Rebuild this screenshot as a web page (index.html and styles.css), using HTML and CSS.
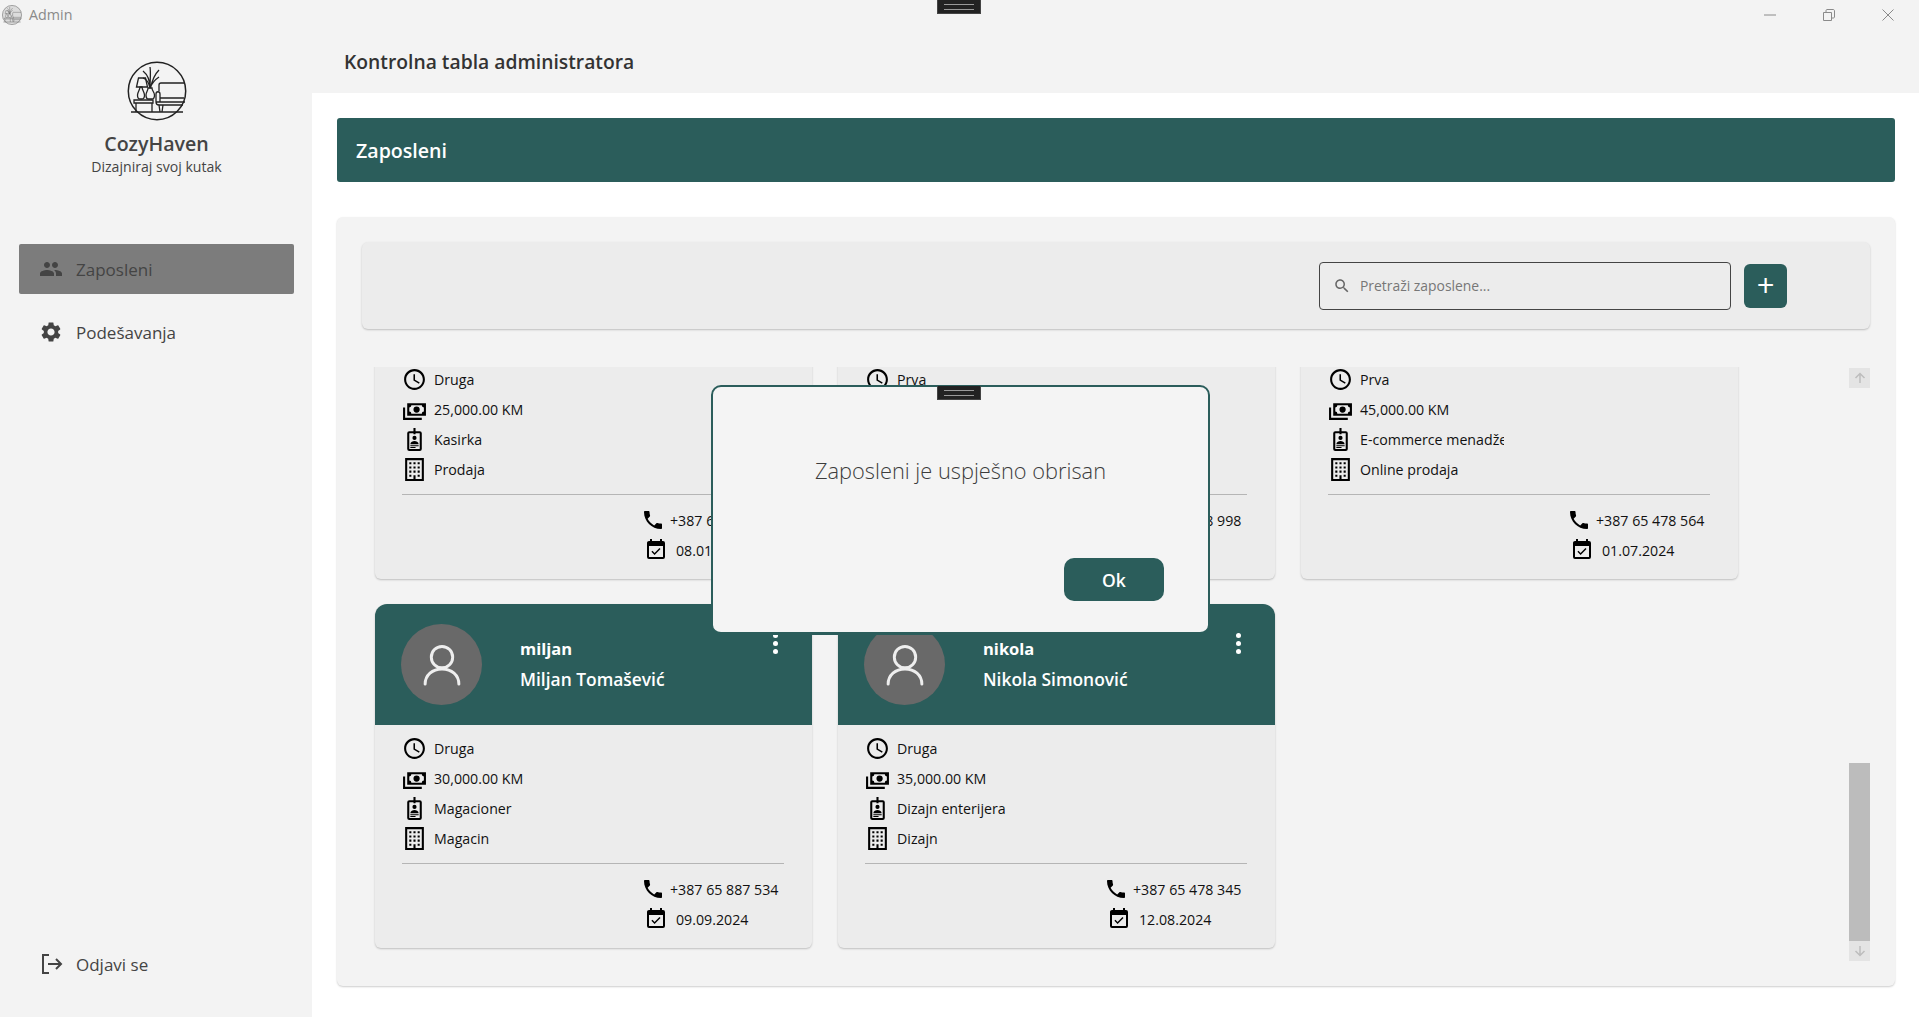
FILE: index.html
```html
<!DOCTYPE html>
<html lang="bs">
<head>
<meta charset="utf-8">
<title>Admin</title>
<link rel="stylesheet" href="styles.css">
</head>
<body>
<svg class="defs" width="0" height="0" aria-hidden="true">
  <defs>
    <symbol id="i-logo" viewBox="0 0 60 60">
      <g fill="none" stroke="currentColor" stroke-width="1.3">
        <circle cx="30" cy="30" r="28.7" stroke-width="1.5"/>
        <path d="M4 51H56" stroke-width="1.5"/>
        <path d="M9.5 26 11.5 17H18.5L20.5 26Z"/>
        <path d="M13 26C13 29 10.5 31 10.5 34S12 38 13 38H15C16 38 17.5 37 17.5 34S15 29 15 26Z"/>
        <path d="M21 27C21 30 19 31 19 34S20.500 38 21 38H25C26 38 27.500 37 27.500 34S25 30 25 27Z"/>
        <path d="M7 39H26V42H7ZM9 42V51M25 42V51"/>
        <path d="M23 27C23 20 21 14 16 10M23 27C23 19 24 12 23 6M23.500 27C25 20 27 14 32 9M23 27C25 22 29 18 32 16M23 27C22 22 19 18 16 17"/>
        <path d="M32 30V24C32 23 33 22 34 22H57M29 41V33C29 30 33 30 33 33V37H57M29 41H33V37M29 41C29 43 30 44 32 44H56M33 37V41H58M36 44 35 51M32 44 33 51"/>
      </g>
    </symbol>
    <symbol id="i-clock" viewBox="0 0 24 24"><path d="M11.99 2C6.47 2 2 6.48 2 12s4.470 10 9.990 10C17.520 22 22 17.520 22 12S17.520 2 11.990 2zM12 20c-4.420 0-8-3.580-8-8s3.580-8 8-8 8 3.580 8 8-3.580 8-8 8zm.5-13H11v6l5.250 3.150.75-1.230-4.500-2.670z"/></symbol>
    <symbol id="i-cash" viewBox="0 0 24 24"><path d="M5,6H23V18H5V6M14,9A3,3 0 0,1 17,12A3,3 0 0,1 14,15A3,3 0 0,1 11,12A3,3 0 0,1 14,9M9,8A2,2 0 0,1 7,10V14A2,2 0 0,1 9,16H19A2,2 0 0,1 21,14V10A2,2 0 0,1 19,8H9M1,10H3V20H19V22H1V10Z"/></symbol>
    <symbol id="i-badge" viewBox="0 0 24 24"><path fill-rule="evenodd" d="M11 1H13V4H17A2 2 0 0 1 19 6V21A2 2 0 0 1 17 23H7A2 2 0 0 1 5 21V6A2 2 0 0 1 7 4H11ZM7 6V21H17V6H13V7H11V6ZM12 8.500A2 2 0 1 1 12 12.500A2 2 0 1 1 12 8.500ZM8 16.500C8 14.500 10.500 13.500 12 13.500S16 14.500 16 16.500ZM8 17.500H16V18.500H8ZM8 19.200H13V20.200H8Z"/></symbol>
    <symbol id="i-office" viewBox="0 0 24 24"><path d="M19 3V21H13V17.500H11V21H5V3H19M15 7H17V5H15V7M11 7H13V5H11V7M7 7H9V5H7V7M15 11H17V9H15V11M11 11H13V9H11V11M7 11H9V9H7V11M15 15H17V13H15V15M11 15H13V13H11V15M7 15H9V13H7V15M15 19H17V17H15V19M7 19H9V17H7V19M21 1H3V23H21V1Z"/></symbol>
    <symbol id="i-phone" viewBox="0 0 24 24"><path d="M6.620 10.790c1.440 2.830 3.760 5.140 6.590 6.590l2.200-2.200c.27-.27.67-.36 1.020-.24 1.120.37 2.330.57 3.570.57.55 0 1 .45 1 1V20c0 .55-.45 1-1 1-9.390 0-17-7.610-17-17 0-.55.45-1 1-1h3.500c.55 0 1 .45 1 1 0 1.250.2 2.450.57 3.570.11.35.03.74-.25 1.020l-2.200 2.200z"/></symbol>
    <symbol id="i-cal" viewBox="0 0 24 24"><path d="M19 19H5V8H19M19 3H18V1H16V3H8V1H6V3H5C3.890 3 3 3.900 3 5V19A2 2 0 0 0 5 21H19A2 2 0 0 0 21 19V5A2 2 0 0 0 19 3M16.530 11.060L15.470 10L10.590 14.880L8.470 12.760L7.410 13.820L10.590 17L16.530 11.060Z"/></symbol>
    <symbol id="i-people" viewBox="0 0 24 24"><path d="M16 11c1.660 0 2.990-1.340 2.990-3S17.660 5 16 5c-1.660 0-3 1.340-3 3s1.340 3 3 3zm-8 0c1.660 0 2.990-1.340 2.990-3S9.660 5 8 5C6.340 5 5 6.340 5 8s1.340 3 3 3zm0 2c-2.330 0-7 1.170-7 3.500V19h14v-2.500c0-2.330-4.670-3.500-7-3.500zm8 0c-.29 0-.62.02-.97.05 1.160.84 1.970 1.970 1.970 3.450V19h6v-2.500c0-2.330-4.670-3.500-7-3.500z"/></symbol>
    <symbol id="i-gear" viewBox="0 0 24 24"><path d="M19.140,12.940c0.040-0.300,0.060-0.610,0.060-0.940c0-0.320-0.020-0.640-0.070-0.940l2.030-1.580c0.180-0.140,0.230-0.410,0.120-0.610l-1.920-3.320c-0.120-0.220-0.370-0.290-0.590-0.220l-2.390,0.960c-0.500-0.380-1.030-0.700-1.620-0.940L14.400,2.810c-0.040-0.240-0.240-0.410-0.480-0.410h-3.840c-0.240,0-0.430,0.170-0.470,0.410L9.250,5.350C8.660,5.590,8.120,5.920,7.630,6.290L5.240,5.330c-0.220-0.080-0.470,0-0.590,0.220L2.740,8.870C2.620,9.080,2.660,9.340,2.860,9.480l2.030,1.580C4.840,11.360,4.800,11.690,4.800,12s0.020,0.640,0.070,0.940l-2.030,1.580c-0.180,0.140-0.230,0.410-0.120,0.610l1.920,3.320c0.120,0.220,0.370,0.290,0.590,0.220l2.390-0.960c0.500,0.380,1.030,0.700,1.620,0.940l0.360,2.540c0.050,0.240,0.240,0.410,0.480,0.410h3.840c0.240,0,0.440-0.170,0.470-0.410l0.360-2.540c0.590-0.240,1.130-0.560,1.620-0.940l2.390,0.960c0.220,0.080,0.470,0,0.590-0.220l1.920-3.320c0.120-0.220,0.070-0.470-0.120-0.610L19.140,12.940zM12,15.600c-1.980,0-3.600-1.620-3.600-3.600s1.620-3.600,3.600-3.600s3.600,1.620,3.600,3.600S13.980,15.600,12,15.600z"/></symbol>
    <symbol id="i-search" viewBox="0 0 24 24"><path d="M15.500 14h-.79l-.28-.27C15.410 12.590 16 11.110 16 9.500 16 5.910 13.090 3 9.500 3S3 5.910 3 9.500 5.910 16 9.500 16c1.610 0 3.090-.59 4.230-1.570l.27.28v.79l5 4.990L20.490 19l-4.990-5zm-6 0C7.010 14 5 11.990 5 9.500S7.010 5 9.500 5 14 7.010 14 9.500 11.990 14 9.500 14z"/></symbol>
    <symbol id="i-avatar" viewBox="0 0 48 48"><g fill="none" stroke="currentColor" stroke-width="2.600" stroke-linecap="round"><circle cx="24" cy="17" r="9.500"/><path d="M9 41C9 33 15.500 27.500 24 27.500S39 33 39 41"/></g></symbol>
  </defs>
</svg>

<div class="app">
  <header class="titlebar">
    <div class="titlebar-brand">
      <span class="titlebar-logo"><svg class="fill-box"><use href="#i-logo"/></svg></span>
      <span>Admin</span>
    </div>
    <div class="win-controls">
      <svg class="win-icon" viewBox="0 0 12 12"><path d="M0 6H12"/></svg>
      <svg class="win-icon" viewBox="0 0 12 12"><path d="M.5 3.500H8.500V11.500H.5ZM3 3.500V1.500C3 1 3.500.5 4 .5H10C11 .5 11.500 1 11.500 2V8C11.500 8.500 11 9 10.500 9H8.500"/></svg>
      <svg class="win-icon" viewBox="0 0 12 12"><path d="M.5.5 11.500 11.500M11.500.5.5 11.500"/></svg>
    </div>
  </header>

  <div class="shell">
    <aside class="sidebar">
      <div class="brand">
        <svg class="brand-logo"><use href="#i-logo"/></svg>
        <div class="brand-name">CozyHaven</div>
        <div class="brand-tag">Dizajniraj svoj kutak</div>
      </div>
      <nav class="nav">
        <div class="nav-item active"><svg class="nav-icon"><use href="#i-people"/></svg><span>Zaposleni</span></div>
        <div class="nav-item"><svg class="nav-icon"><use href="#i-gear"/></svg><span>Podešavanja</span></div>
      </nav>
      <div class="nav-item logout">
        <svg class="nav-icon stroke-icon" viewBox="0 0 24 24"><path d="M10 3H4V21H10M9 12H22M17 7 22 12 17 17"/></svg>
        <span>Odjavi se</span>
      </div>
    </aside>

    <main class="main">
      <div class="page-head">Kontrolna tabla administratora</div>
      <div class="content">
        <div class="banner">Zaposleni</div>
        <section class="panel">
          <div class="toolbar">
            <div class="search">
              <svg class="search-icon"><use href="#i-search"/></svg>
              <span>Pretraži zaposlene...</span>
            </div>
            <div class="add-btn">+</div>
          </div>
          <div class="list-wrap">
            <div class="list">
              <article class="card">
                <div class="card-head"></div>
                <div class="card-body">
                  <div class="info"><svg class="ic"><use href="#i-clock"/></svg><span>Druga</span></div>
                  <div class="info"><svg class="ic"><use href="#i-cash"/></svg><span>25,000.00 KM</span></div>
                  <div class="info"><svg class="ic"><use href="#i-badge"/></svg><span>Kasirka</span></div>
                  <div class="info"><svg class="ic"><use href="#i-office"/></svg><span>Prodaja</span></div>
                  <div class="contact">
                    <div class="contact-row"><svg class="ic"><use href="#i-phone"/></svg><span>+387 65 478 112</span></div>
                    <div class="contact-row date"><svg class="ic"><use href="#i-cal"/></svg><span>08.01.2024</span></div>
                  </div>
                </div>
              </article>
              <article class="card">
                <div class="card-head"></div>
                <div class="card-body">
                  <div class="info"><svg class="ic"><use href="#i-clock"/></svg><span>Prva</span></div>
                  <div class="info"></div>
                  <div class="info"></div>
                  <div class="info"></div>
                  <div class="contact">
                    <div class="contact-row"><svg class="ic"><use href="#i-phone"/></svg><span>+387 65 478 998</span></div>
                    <div class="contact-row date"></div>
                  </div>
                </div>
              </article>
              <article class="card">
                <div class="card-head"></div>
                <div class="card-body">
                  <div class="info"><svg class="ic"><use href="#i-clock"/></svg><span>Prva</span></div>
                  <div class="info"><svg class="ic"><use href="#i-cash"/></svg><span>45,000.00 KM</span></div>
                  <div class="info"><svg class="ic"><use href="#i-badge"/></svg><span class="clip">E-commerce menadžer</span></div>
                  <div class="info"><svg class="ic"><use href="#i-office"/></svg><span>Online prodaja</span></div>
                  <div class="contact">
                    <div class="contact-row"><svg class="ic"><use href="#i-phone"/></svg><span>+387 65 478 564</span></div>
                    <div class="contact-row date"><svg class="ic"><use href="#i-cal"/></svg><span>01.07.2024</span></div>
                  </div>
                </div>
              </article>
              <article class="card">
                <div class="card-head">
                  <div class="avatar"><svg class="avatar-icon"><use href="#i-avatar"/></svg></div>
                  <div class="names"><div class="user">miljan</div><div class="full">Miljan Tomašević</div></div>
                  <div class="dots"><i></i><i></i><i></i></div>
                </div>
                <div class="card-body">
                  <div class="info"><svg class="ic"><use href="#i-clock"/></svg><span>Druga</span></div>
                  <div class="info"><svg class="ic"><use href="#i-cash"/></svg><span>30,000.00 KM</span></div>
                  <div class="info"><svg class="ic"><use href="#i-badge"/></svg><span>Magacioner</span></div>
                  <div class="info"><svg class="ic"><use href="#i-office"/></svg><span>Magacin</span></div>
                  <div class="contact">
                    <div class="contact-row"><svg class="ic"><use href="#i-phone"/></svg><span>+387 65 887 534</span></div>
                    <div class="contact-row date"><svg class="ic"><use href="#i-cal"/></svg><span>09.09.2024</span></div>
                  </div>
                </div>
              </article>
              <article class="card">
                <div class="card-head">
                  <div class="avatar"><svg class="avatar-icon"><use href="#i-avatar"/></svg></div>
                  <div class="names"><div class="user">nikola</div><div class="full">Nikola Simonović</div></div>
                  <div class="dots"><i></i><i></i><i></i></div>
                </div>
                <div class="card-body">
                  <div class="info"><svg class="ic"><use href="#i-clock"/></svg><span>Druga</span></div>
                  <div class="info"><svg class="ic"><use href="#i-cash"/></svg><span>35,000.00 KM</span></div>
                  <div class="info"><svg class="ic"><use href="#i-badge"/></svg><span>Dizajn enterijera</span></div>
                  <div class="info"><svg class="ic"><use href="#i-office"/></svg><span>Dizajn</span></div>
                  <div class="contact">
                    <div class="contact-row"><svg class="ic"><use href="#i-phone"/></svg><span>+387 65 478 345</span></div>
                    <div class="contact-row date"><svg class="ic"><use href="#i-cal"/></svg><span>12.08.2024</span></div>
                  </div>
                </div>
              </article>
            </div>
            <div class="scrollbar">
              <div class="sb-btn"><svg class="sb-arrow" viewBox="0 0 12 12"><path d="M1.500 6 6 1.500 10.500 6M6 1.500V11"/></svg></div>
              <div class="sb-track"><div class="sb-thumb"></div></div>
              <div class="sb-btn"><svg class="sb-arrow" viewBox="0 0 12 12"><path d="M1.500 6 6 10.500 10.500 6M6 10.500V1"/></svg></div>
            </div>
          </div>
        </section>
      </div>
    </main>
  </div>
</div>

<div class="handle"></div>

<div class="dialog">
  <div class="handle handle-dialog"></div>
  <div class="dialog-text">Zaposleni je uspješno obrisan</div>
  <div class="dialog-btn">Ok</div>
</div>
</body>
</html>
```

FILE: styles.css
```css
* { box-sizing: border-box; }
html, body { margin: 0; height: 100%; }
body {
  background: #fff;
  color: #444;
  font-family: "Open Sans", "Noto Sans", "Liberation Sans", sans-serif;
  overflow: hidden;
}
.defs { position: absolute; }
svg { fill: currentColor; display: block; flex: none; }
.fill-box { width: 100%; height: 100%; }

.app { height: 1017px; display: flex; flex-direction: column; background: #f3f3f3; }

.titlebar {
  height: 29px; flex: none;
  display: flex; justify-content: space-between; align-items: center;
  padding-left: 2px; padding-right: 25px;
  color: #8a8a8a; font-size: 14.300px;
}
.titlebar-brand { display: flex; align-items: center; gap: 7px; }
.titlebar-logo { width: 20px; height: 20px; background: #dcdcdc; border-radius: 50%; color: #666; }
.win-controls { display: flex; gap: 47px; }
.win-icon { width: 12px; height: 12px; fill: none; stroke: #8a8a8a; stroke-width: 1; }

.shell { flex: 1; display: flex; min-height: 0; }

.sidebar {
  width: 312px; flex: none;
  display: flex; flex-direction: column;
  padding: 32px 18px 0 19px;
}
.brand { display: flex; flex-direction: column; align-items: center; color: #444; }
.brand-logo { width: 60px; height: 60px; color: #222; }
.brand-name { font-size: 19.600px; font-weight: 600; line-height: 25px; margin-top: 10px; margin-bottom: 1px; }
.brand-tag { font-size: 14.100px; line-height: 20px; }
.nav { margin-top: 67px; display: flex; flex-direction: column; gap: 13px; flex: 1; }
.nav-item {
  height: 50px; display: flex; align-items: center; gap: 13px;
  padding-left: 20px; font-size: 17px; color: #444; font-weight: 500;
}
.nav-item.active { background: #7c7c7c; border-radius: 2px; font-weight: 400; }
.nav-icon { width: 24px; height: 24px; }
.stroke-icon { fill: none; stroke: currentColor; stroke-width: 2; }
.logout { margin-bottom: 28px; }

.main { flex: 1; min-width: 0; display: flex; flex-direction: column; }
.page-head {
  height: 64px; flex: none; display: flex; align-items: center;
  padding: 0 0 0 32px;
  font-size: 19.300px; font-weight: 600; color: #333;
}
.content {
  flex: 1; min-height: 0; background: #fff;
  padding: 25px 24px 31px 25px;
  display: flex; flex-direction: column; gap: 35px;
}
.banner {
  height: 64px; flex: none; background: #2b5d5b; border-radius: 3px;
  color: #fff; font-size: 19.600px; font-weight: 600;
  display: flex; align-items: center; padding-left: 19px;
}
.panel {
  flex: 1; min-height: 0; background: #f3f3f3; border-radius: 6px;
  box-shadow: 0 1px 2px rgba(0,0,0,.2);
  padding: 25px 25px 25px;
  display: flex; flex-direction: column; gap: 38px;
}
.toolbar {
  height: 87px; flex: none; background: #ececec; border-radius: 6px;
  box-shadow: 0 1px 2px rgba(0,0,0,.22);
  display: flex; align-items: center; justify-content: flex-end; gap: 13px;
  padding-right: 83px;
}
.search {
  width: 412px; height: 48px; border: 1.5px solid #444; border-radius: 4px;
  display: flex; align-items: center; gap: 9px; padding-left: 13px;
  font-size: 13.900px; color: #777;
}
.search-icon { width: 18px; height: 18px; color: #666; }
.add-btn {
  width: 43px; height: 44px; border-radius: 6px; background: #2b5d5b;
  color: #fff; font-size: 31px; line-height: 42px; text-align: center; font-weight: 400;
}

.list-wrap { flex: 1; min-height: 0; display: flex; }
.list {
  flex: 1; min-width: 0; overflow: hidden;
  display: grid; grid-template-columns: repeat(3, 437px); column-gap: 26px; row-gap: 25px;
  align-content: end; padding: 0 0 13px 13px;
}
.card {
  height: 344px; background: #ececec; border-radius: 12px 12px 6px 6px;
  box-shadow: 0 1px 2px rgba(0,0,0,.22);
  display: flex; flex-direction: column;
}
.card-head {
  height: 121px; flex: none; background: #2b5d5b; border-radius: 12px 12px 0 0;
  position: relative; color: #fff;
  display: flex; align-items: center; padding-left: 26px;
}
.avatar {
  width: 81px; height: 81px; border-radius: 50%; background: #696969; color: #eee;
  display: flex; align-items: center; justify-content: center;
}
.avatar-icon { width: 54px; height: 54px; }
.names { margin-left: 38px; }
.user { font-size: 16.500px; font-weight: 700; line-height: 30px; margin-top: -1px; }
.full { font-size: 17.400px; font-weight: 600; line-height: 31px; }
.dots {
  position: absolute; right: 34px; top: 29px;
  display: flex; flex-direction: column; gap: 3px;
}
.dots i { width: 5px; height: 5px; border-radius: 50%; background: #fff; }

.card-body { flex: 1; padding: 8px 28px 0 27px; color: #111; font-size: 14.200px; }
.info { height: 30px; display: flex; align-items: center; gap: 7px; }
.ic { width: 25px; height: 25px; color: #000; }
.clip { display: block; width: 144px; overflow: hidden; white-space: nowrap; }
.contact {
  margin-top: 10px; border-top: 1px solid #b5b5b5; padding-top: 10px;
  display: flex; flex-direction: column; align-items: flex-end; padding-right: 5px;
}
.contact-row { height: 30px; width: 136px; display: flex; align-items: center; gap: 5px; }
.contact-row .ic { width: 24px; height: 24px; margin-left: -2px; }
.date { gap: 8px; padding-left: 3px; }

.scrollbar { width: 21px; flex: none; display: flex; flex-direction: column; margin-top: 1px; }
.sb-btn { height: 20px; flex: none; background: #e4e4e4; display: flex; align-items: center; justify-content: center; }
.sb-arrow { width: 12px; height: 12px; fill: none; stroke: #bdbdbd; stroke-width: 1.500; }
.sb-track { flex: 1; display: flex; flex-direction: column; justify-content: flex-end; }
.sb-thumb { height: 178px; background: #bcbcbc; }

.handle {
  position: absolute; left: 937px; top: 0; width: 44px; height: 14px;
  background: #222; border: 1px solid #444; border-top: 0;
}
.handle::after {
  content: ""; position: absolute; left: 6px; right: 6px; top: 4px; height: 4px;
  border-top: 1px solid #999; border-bottom: 1px solid #999;
}
.handle-dialog { left: 224px; top: -1px; }

.dialog {
  position: absolute; left: 711px; top: 385px; width: 499px; height: 250px;
  background: #f4f4f4; border: 2px solid #2b5d5b; border-bottom-width: 3px; border-radius: 10px;
}
.dialog-text {
  position: absolute; left: 0; right: 0; top: 69px; text-align: center;
  font-size: 21.800px; font-weight: 300; color: #3c3c3c; line-height: 30px;
}
.dialog-btn {
  position: absolute; right: 44px; bottom: 31px; width: 100px; height: 43px;
  background: #2b5d5b; border-radius: 10px; color: #fff;
  font-size: 17.500px; font-weight: 600; display: flex; align-items: center; justify-content: center;
}
```
